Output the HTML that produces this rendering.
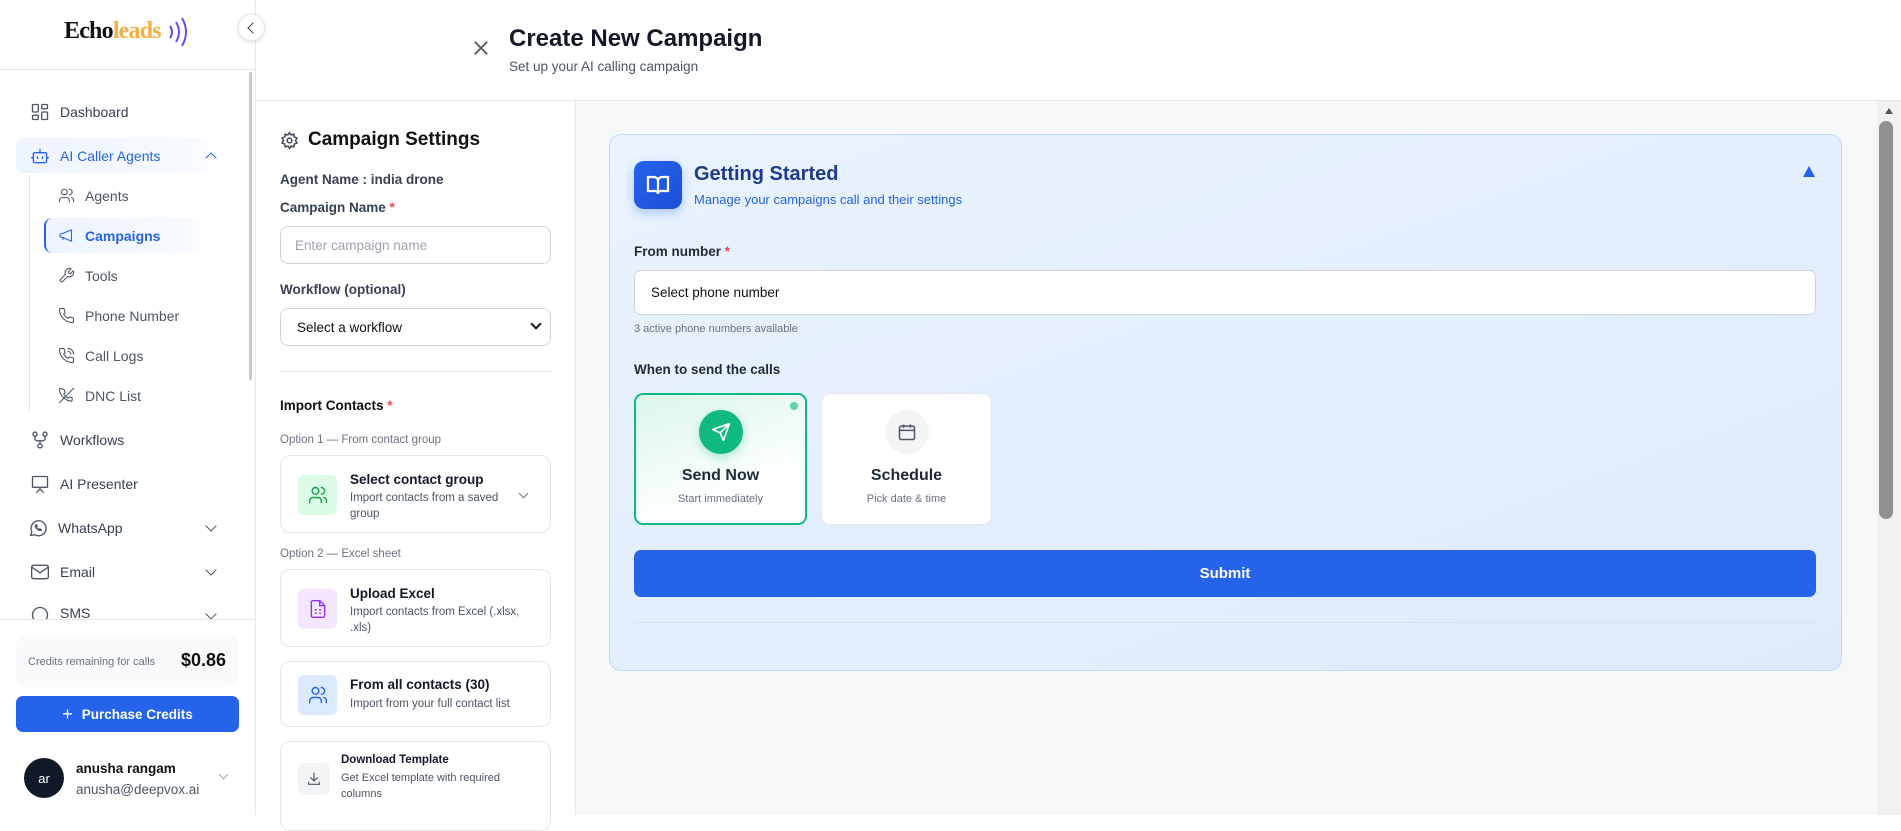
<!DOCTYPE html>
<html><head><meta charset="utf-8"><style>
*{box-sizing:border-box;margin:0;padding:0}
body{width:1901px;height:815px;overflow:hidden;font-family:"Liberation Sans",sans-serif;background:#fff;position:relative;color:#111827}
.a{position:absolute}
.side{left:0;top:0;width:256px;height:815px;border-right:1px solid #e5e7eb;background:#fff}
.nav{position:absolute;left:30px;font-size:14px;color:#374151;display:flex;align-items:center;gap:10px}
.nav svg{width:20px;height:20px;fill:none;stroke:#4b5563;stroke-width:1.6;stroke-linecap:round;stroke-linejoin:round}
.sub{position:absolute;left:58px;font-size:14px;color:#4b5563;display:flex;align-items:center;gap:10px}
.sub svg{width:17px;height:17px;fill:none;stroke:#4b5563;stroke-width:1.5;stroke-linecap:round;stroke-linejoin:round}
.chev{position:absolute;left:207px;width:8px;height:8px;border-right:1.6px solid #4b5563;border-bottom:1.6px solid #4b5563;transform:rotate(45deg)}
.lbl{position:absolute;left:280px;font-size:13.5px;font-weight:bold;color:#374151}
.inp{position:absolute;left:280px;width:271px;border:1px solid #d1d5db;border-radius:8px;background:#fff;font-size:13.5px;padding-left:14px;display:flex;align-items:center}
.opt{position:absolute;left:280px;width:271px;border:1.5px solid #e5e7eb;border-radius:10px;background:#fff}
.ib{position:absolute;left:17px;width:39px;height:40px;border-radius:6px;display:flex;align-items:center;justify-content:center}
.ib svg{width:20px;height:20px;fill:none;stroke-width:1.7;stroke-linecap:round;stroke-linejoin:round}
.ot{position:absolute;left:69px;font-size:13.5px;font-weight:bold;color:#111827}
.od{position:absolute;left:69px;font-size:11.5px;color:#4b5563;line-height:16px}
</style></head><body>
<div class="a side">
  <div class="a" style="left:64px;top:18px;font-family:'Liberation Serif',serif;font-weight:bold;font-size:24px;letter-spacing:-0.8px"><span style="color:#111">Echo</span><span style="color:#f5b041">leads</span></div>
  <svg class="a" style="left:167px;top:17px" width="24" height="30" viewBox="0 0 24 30" fill="none" stroke="#6d4af0" stroke-width="2"><path d="M3 9q4 6 0 12"/><path d="M9 5q6 10 0 20"/><path d="M15 1q8 14 0 28"/></svg>
  <div class="a" style="left:0;top:69px;width:256px;border-top:1px solid #e5e7eb"></div>
  <div class="a" style="left:249px;top:72px;width:3px;height:308px;background:#c7cbd1;border-radius:2px"></div>
  <div class="nav" style="top:102px"><svg viewBox="0 0 24 24"><rect x="3" y="3" width="7" height="9" rx="1"/><rect x="14" y="3" width="7" height="5" rx="1"/><rect x="14" y="12" width="7" height="9" rx="1"/><rect x="3" y="16" width="7" height="5" rx="1"/></svg><span>Dashboard</span></div>
  <div class="a" style="left:16px;top:138px;width:210px;height:35px;border-radius:8px;background:linear-gradient(90deg,#eef4ff,#f6f9ff 80%,#fff)"></div>
  <div class="nav" style="top:146px;color:#2563eb"><svg viewBox="0 0 24 24" style="stroke:#2563eb"><rect x="4" y="8" width="16" height="12" rx="2"/><path d="M12 8V4M9 13v2M15 13v2M2 14h2M20 14h2"/></svg><span>AI Caller Agents</span></div>
  <div class="chev" style="top:154px;transform:rotate(-135deg);border-color:#2563eb"></div>
  <div class="a" style="left:29px;top:175px;height:237px;border-left:1.5px solid #e5e7eb"></div>
  <div class="sub" style="top:187px"><svg viewBox="0 0 24 24"><circle cx="9" cy="7" r="4"/><path d="M2 21v-2a4 4 0 0 1 4-4h6a4 4 0 0 1 4 4v2M16 3a4 4 0 0 1 0 8M22 21v-2a4 4 0 0 0-3-4"/></svg><span>Agents</span></div>
  <div class="a" style="left:44px;top:218px;width:170px;height:35px;border-radius:8px;border-left:2px solid #2563eb;background:linear-gradient(90deg,#eef4ff,#f6f9ff 80%,#fff)"></div>
  <div class="sub" style="top:227px;color:#2563eb;font-weight:bold"><svg viewBox="0 0 24 24" style="stroke:#2563eb"><path d="M3 10v4l4 1 12 5V4L7 9z"/><path d="M7 15v3"/></svg><span>Campaigns</span></div>
  <div class="sub" style="top:267px"><svg viewBox="0 0 24 24"><path d="M14.7 6.3a1 1 0 0 0 0 1.4l1.6 1.6a1 1 0 0 0 1.4 0l3.8-3.8a6 6 0 0 1-7.9 7.9l-6.9 6.9a2.1 2.1 0 0 1-3-3l6.9-6.9a6 6 0 0 1 7.9-7.9z"/></svg><span>Tools</span></div>
  <div class="sub" style="top:307px"><svg viewBox="0 0 24 24"><path d="M22 17v3a2 2 0 0 1-2 2A19 19 0 0 1 2 4a2 2 0 0 1 2-2h3a2 2 0 0 1 2 2l1 4-2 2a16 16 0 0 0 6 6l2-2 4 1a2 2 0 0 1 2 2z"/></svg><span>Phone Number</span></div>
  <div class="sub" style="top:347px"><svg viewBox="0 0 24 24"><path d="M22 17v3a2 2 0 0 1-2 2A19 19 0 0 1 2 4a2 2 0 0 1 2-2h3a2 2 0 0 1 2 2l1 4-2 2a16 16 0 0 0 6 6l2-2 4 1a2 2 0 0 1 2 2z"/><path d="M14 2a8 8 0 0 1 8 8M14 6a4 4 0 0 1 4 4"/></svg><span>Call Logs</span></div>
  <div class="sub" style="top:387px"><svg viewBox="0 0 24 24"><path d="M22 2 2 22M9 4l1 4-2 2a16 16 0 0 0 6 6l2-2 4 1v3a2 2 0 0 1-2 2A19 19 0 0 1 2 4a2 2 0 0 1 2-2z"/></svg><span>DNC List</span></div>
  <div class="nav" style="top:430px"><svg viewBox="0 0 24 24"><circle cx="6" cy="5" r="2.5"/><circle cx="18" cy="5" r="2.5"/><circle cx="12" cy="19" r="2.5"/><path d="M6 8v2a3 3 0 0 0 3 3h6a3 3 0 0 0 3-3V8M12 13v3"/></svg><span>Workflows</span></div>
  <div class="nav" style="top:474px"><svg viewBox="0 0 24 24"><rect x="3" y="3" width="18" height="13" rx="1"/><path d="M12 16v2M8 22l4-4 4 4"/></svg><span>AI Presenter</span></div>
  <div class="nav" style="top:518px;left:28px"><svg viewBox="0 0 24 24"><path d="M3 21l1.6-4.7A9 9 0 1 1 8 20z"/><path d="M9 9c0 3 3 6 6 6l1-1-2-1-1 1c-1-.5-2.5-2-3-3l1-1-1-2z"/></svg><span>WhatsApp</span></div>
  <div class="chev" style="top:522px"></div>
  <div class="nav" style="top:562px"><svg viewBox="0 0 24 24"><rect x="2" y="4" width="20" height="16" rx="2"/><path d="M2 6l10 7 10-7"/></svg><span>Email</span></div>
  <div class="chev" style="top:566px"></div>
  <div class="nav" style="top:605px;height:14px;overflow:hidden;align-items:flex-start"><svg viewBox="0 0 24 24"><circle cx="12" cy="12" r="9"/></svg><span>SMS</span></div>
  <div class="chev" style="top:610px;height:8px"></div>
  <div class="a" style="left:0;top:619px;width:255px;height:196px;background:#fff;border-top:1px solid #e5e7eb"></div>
  <div class="a" style="left:16px;top:636px;width:223px;height:51px;border-radius:10px;background:#f9fafb"></div>
  <div class="a" style="left:28px;top:656px;font-size:11px;color:#6b7280">Credits remaining for calls</div>
  <div class="a" style="left:181px;top:650px;font-size:18px;font-weight:bold;color:#111">$0.86</div>
  <div class="a" style="left:16px;top:696px;width:223px;height:36px;border-radius:7px;background:#2563eb;color:#fff;font-size:13.5px;font-weight:bold;display:flex;align-items:center;justify-content:center"><span style="font-size:18px;font-weight:normal;margin-right:9px">+</span>Purchase Credits</div>
  <div class="a" style="left:24px;top:758px;width:40px;height:40px;border-radius:50%;background:#111827;color:#fff;font-size:13px;display:flex;align-items:center;justify-content:center">ar</div>
  <div class="a" style="left:76px;top:761px;font-size:13.5px;font-weight:bold;color:#111">anusha rangam</div>
  <div class="a" style="left:76px;top:782px;font-size:13.5px;color:#4b5563">anusha@deepvox.ai</div>
  <div class="chev" style="left:220px;top:771px;width:7px;height:7px;border-color:#9ca3af;border-width:1.2px"></div>
</div>
<div class="a" style="left:238px;top:14px;width:27px;height:27px;border-radius:50%;background:#fff;border:1px solid #e5e7eb;box-shadow:0 1px 4px rgba(0,0,0,.15)"></div>
<div class="a" style="left:249px;top:24px;width:8px;height:8px;border-left:1.6px solid #374151;border-bottom:1.6px solid #374151;transform:rotate(45deg)"></div>
<!-- header -->
<div class="a" style="left:257px;top:100px;width:1644px;border-top:1px solid #e5e7eb"></div>
<svg class="a" style="left:473px;top:40px" width="16" height="16" viewBox="0 0 18 18" stroke="#4b5563" stroke-width="2"><path d="M2 2l14 14M16 2L2 16"/></svg>
<div class="a" style="left:509px;top:25px;font-size:24px;font-weight:bold;color:#111827">Create New Campaign</div>
<div class="a" style="left:509px;top:59px;font-size:13.5px;color:#4b5563">Set up your AI calling campaign</div>
<!-- left panel -->
<div class="a" style="left:575px;top:101px;width:1px;height:714px;background:#e5e7eb"></div>
<div class="a" style="left:576px;top:101px;width:1325px;height:714px;background:#f7f8fa"></div>
<svg class="a" style="left:280px;top:131px" width="19" height="19" viewBox="0 0 24 24" fill="none" stroke="#374151" stroke-width="1.8"><circle cx="12" cy="12" r="3"/><path d="M12 2l2 3 3.5-1 .5 3.5L21.5 9 19.5 12l2 3-3.5 1.5-.5 3.5-3.5-1L12 22l-2-3-3.5 1-.5-3.5L2.5 15l2-3-2-3L6 7.5 6.5 4l3.5 1z"/></svg>
<div class="a" style="left:308px;top:129px;font-size:19px;font-weight:bold;color:#111">Campaign Settings</div>
<div class="lbl" style="top:172px">Agent Name : india drone</div>
<div class="lbl" style="top:200px">Campaign Name <span style="color:#ef4444">*</span></div>
<div class="inp" style="top:226px;height:38px;color:#9ca3af">Enter campaign name</div>
<div class="lbl" style="top:282px">Workflow (optional)</div>
<div class="inp" style="top:308px;height:38px;color:#111;padding-left:16px">Select a workflow</div>
<div class="a" style="left:532px;top:320px;width:8px;height:8px;border-right:2px solid #111;border-bottom:2px solid #111;transform:rotate(45deg)"></div>
<div class="a" style="left:280px;top:371px;width:271px;border-top:1px solid #e5e7eb"></div>
<div class="lbl" style="top:398px;color:#111">Import Contacts <span style="color:#ef4444">*</span></div>
<div class="a" style="left:280px;top:434px;font-size:11.5px;color:#6b7280">Option 1 — From contact group</div>
<div class="opt" style="top:455px;height:78px">
  <div class="ib" style="top:19px;background:#dcfce7"><svg viewBox="0 0 24 24" stroke="#16a34a"><circle cx="9" cy="7" r="4"/><path d="M2 21v-2a4 4 0 0 1 4-4h6a4 4 0 0 1 4 4v2M16 3a4 4 0 0 1 0 8M22 21v-2a4 4 0 0 0-3-4"/></svg></div>
  <div class="ot" style="top:16px">Select contact group</div>
  <div class="od" style="top:34px">Import contacts from a saved<br>group</div>
  <div class="a" style="left:239px;top:34px;width:7px;height:7px;border-right:1.4px solid #6b7280;border-bottom:1.4px solid #6b7280;transform:rotate(45deg)"></div>
</div>
<div class="a" style="left:280px;top:548px;font-size:11.5px;color:#6b7280">Option 2 — Excel sheet</div>
<div class="opt" style="top:569px;height:78px">
  <div class="ib" style="top:19px;background:#f3e8ff"><svg viewBox="0 0 24 24" stroke="#9333ea"><path d="M14 2H6a2 2 0 0 0-2 2v16a2 2 0 0 0 2 2h12a2 2 0 0 0 2-2V8z"/><path d="M14 2v6h6M9 13h1M14 13h1M9 17h1M14 17h1"/></svg></div>
  <div class="ot" style="top:16px">Upload Excel</div>
  <div class="od" style="top:34px">Import contacts from Excel (.xlsx,<br>.xls)</div>
</div>
<div class="opt" style="top:661px;height:66px">
  <div class="ib" style="top:13px;background:#dbeafe"><svg viewBox="0 0 24 24" stroke="#2563eb"><circle cx="9" cy="7" r="4"/><path d="M2 21v-2a4 4 0 0 1 4-4h6a4 4 0 0 1 4 4v2M16 3a4 4 0 0 1 0 8M22 21v-2a4 4 0 0 0-3-4"/></svg></div>
  <div class="ot" style="top:15px">From all contacts (30)</div>
  <div class="od" style="top:34px">Import from your full contact list</div>
</div>
<div class="opt" style="top:741px;height:90px">
  <div class="ib" style="top:21px;width:32px;height:32px;background:#f3f4f6"><svg viewBox="0 0 24 24" stroke="#4b5563" style="width:16px;height:16px"><path d="M12 3v12M7 10l5 5 5-5M4 17v3h16v-3"/></svg></div>
  <div class="ot" style="left:60px;top:12px;font-size:11.5px">Download Template</div>
  <div class="od" style="left:60px;top:28px;font-size:11px">Get Excel template with required<br>columns</div>
</div>
<!-- main card -->
<div class="a" style="left:609px;top:134px;width:1233px;height:537px;border:1.5px solid #bfdbfe;border-radius:12px;background:linear-gradient(160deg,#eaf3ff,#deebfc)"></div>
<div class="a" style="left:634px;top:161px;width:48px;height:48px;border-radius:10px;background:linear-gradient(135deg,#2563eb,#1d4ed8);box-shadow:0 4px 10px rgba(37,99,235,.3)"></div>
<svg class="a" style="left:646px;top:173px" width="24" height="24" viewBox="0 0 24 24" fill="none" stroke="#fff" stroke-width="2.2"><path d="M2 4h6a4 4 0 0 1 4 4v13a3 3 0 0 0-3-3H2zM22 4h-6a4 4 0 0 0-4 4v13a3 3 0 0 1 3-3h7z"/></svg>
<div class="a" style="left:694px;top:163px;font-size:20px;font-weight:bold;color:#1e3a8a">Getting Started</div>
<div class="a" style="left:694px;top:192px;font-size:13px;color:#2563eb">Manage your campaigns call and their settings</div>
<div class="a" style="left:1803px;top:166px;width:0;height:0;border-left:6px solid transparent;border-right:6px solid transparent;border-bottom:11px solid #2563eb"></div>
<div class="a" style="left:634px;top:244px;font-size:13.5px;font-weight:bold;color:#1f2937">From number <span style="color:#ef4444">*</span></div>
<div class="a" style="left:634px;top:270px;width:1182px;height:45px;border:1px solid #d1d5db;border-radius:7px;background:#fff;font-size:13.5px;color:#111;padding-left:16px;display:flex;align-items:center">Select phone number</div>
<div class="a" style="left:634px;top:323px;font-size:11px;color:#6b7280">3 active phone numbers available</div>
<div class="a" style="left:634px;top:362px;font-size:13.5px;font-weight:bold;color:#1f2937">When to send the calls</div>
<div class="a" style="left:634px;top:393px;width:173px;height:132px;border:2px solid #10b981;border-radius:9px;background:linear-gradient(160deg,#dcf7ec,#fff 75%)"></div>
<div class="a" style="left:790px;top:402px;width:8px;height:8px;border-radius:50%;background:#5ed3a7"></div>
<div class="a" style="left:699px;top:410px;width:44px;height:44px;border-radius:50%;background:#10b981;box-shadow:0 4px 10px rgba(16,185,129,.3)"></div>
<svg class="a" style="left:711px;top:422px" width="20" height="20" viewBox="0 0 24 24" fill="none" stroke="#fff" stroke-width="2" stroke-linejoin="round"><path d="M22 2 11 13M22 2l-7 20-4-9-9-4z"/></svg>
<div class="a" style="left:634px;top:467px;width:173px;text-align:center;font-size:16px;font-weight:bold;color:#1f2937">Send Now</div>
<div class="a" style="left:634px;top:493px;width:173px;text-align:center;font-size:11px;color:#6b7280">Start immediately</div>
<div class="a" style="left:821px;top:393px;width:171px;height:132px;border:1.5px solid #e5e7eb;border-radius:9px;background:#fff"></div>
<div class="a" style="left:885px;top:410px;width:44px;height:44px;border-radius:50%;background:#f3f4f6"></div>
<svg class="a" style="left:897px;top:422px" width="20" height="20" viewBox="0 0 24 24" fill="none" stroke="#4b5563" stroke-width="1.8"><rect x="3" y="5" width="18" height="16" rx="2"/><path d="M3 10h18M8 3v4M16 3v4"/></svg>
<div class="a" style="left:821px;top:467px;width:171px;text-align:center;font-size:16px;font-weight:bold;color:#1f2937">Schedule</div>
<div class="a" style="left:821px;top:493px;width:171px;text-align:center;font-size:11px;color:#6b7280">Pick date &amp; time</div>
<div class="a" style="left:634px;top:550px;width:1182px;height:47px;border-radius:7px;background:#2563eb;color:#fff;font-size:15px;font-weight:bold;display:flex;align-items:center;justify-content:center">Submit</div>
<div class="a" style="left:634px;top:622px;width:1182px;border-top:1px solid #d6e2f3"></div>
<!-- scrollbar -->
<div class="a" style="left:1877px;top:101px;width:24px;height:714px;background:#f1f1f1"></div>
<div class="a" style="left:1885px;top:108px;width:0;height:0;border-left:4px solid transparent;border-right:4px solid transparent;border-bottom:6px solid #555"></div>
<div class="a" style="left:1879px;top:121px;width:14px;height:398px;border-radius:7px;background:#909090"></div>
</body></html>
